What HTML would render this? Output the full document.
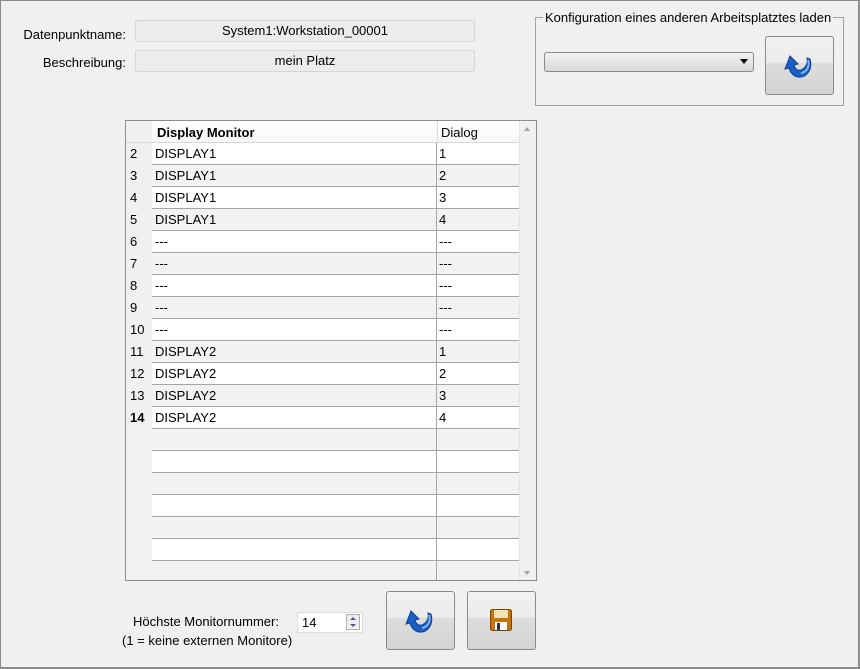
<!DOCTYPE html>
<html><head><meta charset="utf-8"><style>
*{margin:0;padding:0;box-sizing:border-box}
body{width:860px;height:669px;background:#f0f0f0;font-family:"Liberation Sans",Arial,sans-serif;font-size:13px;color:#000;position:relative;overflow:hidden}
.frame{position:absolute;left:0;top:0;width:860px;height:669px;border:1px solid #8c8c8c;border-right:2px solid #8c8c8c;border-bottom:2px solid #8c8c8c}
.a{position:absolute}
.lbl{text-align:right;width:126px;left:0}
.field{background:#ececec;border:1px solid #d6d6d6;border-radius:2px;text-align:center;line-height:20px;height:22px}
.btn{border:1px solid #8a8a8a;border-radius:3px;background:linear-gradient(#f2f2f2 0%,#ebebeb 45%,#dddddd 46%,#d3d3d3 100%)}
.tbl{left:125px;top:120px;width:412px;height:461px;border:1px solid #8c8c8c;background:#f2f2f2;overflow:hidden}
.row{position:absolute;left:0;height:22px;width:393px;border-bottom:1px solid #a5a5a5}
.rn{position:absolute;left:0;top:0;width:26px;height:22px;background:#f0f0f0;padding-left:4px;line-height:22px}
.c1{position:absolute;left:26px;top:0;width:285px;height:21px;line-height:22px;padding-left:3px;border-right:1px solid #a5a5a5}
.c2{position:absolute;left:311px;top:0;width:82px;height:21px;line-height:22px;padding-left:2px}
.w{background:#fff}.g{background:#f2f2f2}
</style></head><body>
<div class="frame"></div>
<div class="a lbl" style="top:27px">Datenpunktname:</div>
<div class="a lbl" style="top:55px">Beschreibung:</div>
<div class="a field" style="left:135px;top:20px;width:340px">System1:Workstation_00001</div>
<div class="a field" style="left:135px;top:50px;width:340px">mein Platz</div>

<div class="a" style="left:535px;top:17px;width:309px;height:89px;border:1px solid #a0a0a0"></div>
<div class="a" style="left:543px;top:10px;background:#f0f0f0;padding:0 2px">Konfiguration eines anderen Arbeitsplatztes laden</div>
<div class="a" style="left:544px;top:52px;width:210px;height:20px;border:1px solid #8a8a8a;border-radius:3px;background:linear-gradient(#f2f2f2,#d8d8d8)"></div>
<div class="a" style="left:740px;top:59px;width:0;height:0;border-left:4px solid transparent;border-right:4px solid transparent;border-top:5px solid #000"></div>
<div class="a btn" style="left:765px;top:36px;width:69px;height:59px"></div>
<svg class="a" style="left:783px;top:51px" width="32" height="30" viewBox="0 0 32 30"><path d="M27 8 C30 18 24 27 15 26 C10 25 7 21 6 17 L2 18 L7 5 L15 13 L11 14 C12 18 15 20 18 19 C23 17 25 12 24 7 Z" fill="#1a5fc8" stroke="#0c3e93" stroke-width="1"/><path d="M25 9 C27 15 24 21 18 22" stroke="#7fb2f0" stroke-width="2" fill="none"/></svg>

<div class="a tbl">
 <div class="a" style="left:0;top:0;width:393px;height:22px;background:linear-gradient(#f0f0f0,#f0f0f0) 0 0/26px 22px no-repeat,linear-gradient(#fff,#f7f7f7);border-bottom:1px solid #d8d8d8"></div>
 <div class="a" style="left:31px;top:4px;font-weight:bold">Display Monitor</div>
 <div class="a" style="left:311px;top:0;width:1px;height:22px;background:#d8d8d8"></div>
 <div class="a" style="left:315px;top:4px">Dialog</div>
 <div class="a" style="left:26px;top:22px;width:285px;height:438px;border-right:1px solid #a5a5a5"></div>
 <div class="a" style="left:393px;top:0;width:17px;height:460px;background:#f0f0f0;border-left:1px solid #e4e4e4"></div>
 <div class="a" style="left:398px;top:6px;width:0;height:0;border-left:3px solid transparent;border-right:3px solid transparent;border-bottom:4px solid #a0a0a0"></div>
 <div class="a" style="left:398px;top:450px;width:0;height:0;border-left:3px solid transparent;border-right:3px solid transparent;border-top:4px solid #a0a0a0"></div>

 <div class="row w" style="top:22px"><div class="rn">2</div><div class="c1">DISPLAY1</div><div class="c2">1</div></div>
 <div class="row g" style="top:44px"><div class="rn">3</div><div class="c1">DISPLAY1</div><div class="c2">2</div></div>
 <div class="row w" style="top:66px"><div class="rn">4</div><div class="c1">DISPLAY1</div><div class="c2">3</div></div>
 <div class="row g" style="top:88px"><div class="rn">5</div><div class="c1">DISPLAY1</div><div class="c2">4</div></div>
 <div class="row w" style="top:110px"><div class="rn">6</div><div class="c1">---</div><div class="c2">---</div></div>
 <div class="row g" style="top:132px"><div class="rn">7</div><div class="c1">---</div><div class="c2">---</div></div>
 <div class="row w" style="top:154px"><div class="rn">8</div><div class="c1">---</div><div class="c2">---</div></div>
 <div class="row g" style="top:176px"><div class="rn">9</div><div class="c1">---</div><div class="c2">---</div></div>
 <div class="row w" style="top:198px"><div class="rn">10</div><div class="c1">---</div><div class="c2">---</div></div>
 <div class="row g" style="top:220px"><div class="rn">11</div><div class="c1">DISPLAY2</div><div class="c2">1</div></div>
 <div class="row w" style="top:242px"><div class="rn">12</div><div class="c1">DISPLAY2</div><div class="c2">2</div></div>
 <div class="row g" style="top:264px"><div class="rn">13</div><div class="c1">DISPLAY2</div><div class="c2">3</div></div>
 <div class="row w" style="top:286px"><div class="rn" style="font-weight:bold">14</div><div class="c1">DISPLAY2</div><div class="c2">4</div></div>
 <div class="row g" style="top:308px;left:26px;width:367px"><div class="c1" style="left:0"></div></div>
 <div class="row w" style="top:330px;left:26px;width:367px"><div class="c1" style="left:0"></div></div>
 <div class="row g" style="top:352px;left:26px;width:367px"><div class="c1" style="left:0"></div></div>
 <div class="row w" style="top:374px;left:26px;width:367px"><div class="c1" style="left:0"></div></div>
 <div class="row g" style="top:396px;left:26px;width:367px"><div class="c1" style="left:0"></div></div>
 <div class="row w" style="top:418px;left:26px;width:367px"><div class="c1" style="left:0"></div></div>
</div>

<div class="a" style="left:133px;top:614px">Höchste Monitornummer:</div>
<div class="a" style="left:122px;top:633px">(1 = keine externen Monitore)</div>
<div class="a" style="left:297px;top:612px;width:66px;height:21px;background:#fff;border:1px solid #dcdcdc;padding-left:4px;line-height:20px">14</div>
<div class="a" style="left:346px;top:614px;width:14px;height:16px;border:1px solid #b0b0b0;background:#eee"></div>
<div class="a" style="left:350px;top:617px;border-left:3px solid transparent;border-right:3px solid transparent;border-bottom:3px solid #4a5a8a"></div>
<div class="a" style="left:350px;top:624px;border-left:3px solid transparent;border-right:3px solid transparent;border-top:3px solid #4a5a8a"></div>

<div class="a btn" style="left:386px;top:591px;width:69px;height:59px"></div>
<svg class="a" style="left:404px;top:606px" width="32" height="30" viewBox="0 0 32 30"><path d="M27 8 C30 18 24 27 15 26 C10 25 7 21 6 17 L2 18 L7 5 L15 13 L11 14 C12 18 15 20 18 19 C23 17 25 12 24 7 Z" fill="#1a5fc8" stroke="#0c3e93" stroke-width="1"/><path d="M25 9 C27 15 24 21 18 22" stroke="#7fb2f0" stroke-width="2" fill="none"/></svg>
<div class="a btn" style="left:467px;top:591px;width:69px;height:59px"></div>
<svg class="a" style="left:490px;top:609px" width="22" height="22" viewBox="0 0 22 22"><rect x="0.5" y="0.5" width="21" height="21" rx="2" fill="#c8740e" stroke="#7a4306"/><rect x="4" y="1" width="14" height="8" fill="#f3e3b0"/><rect x="5" y="13" width="12" height="8" fill="#fff"/><rect x="7" y="14" width="3" height="7" fill="#333"/></svg>
</body></html>
